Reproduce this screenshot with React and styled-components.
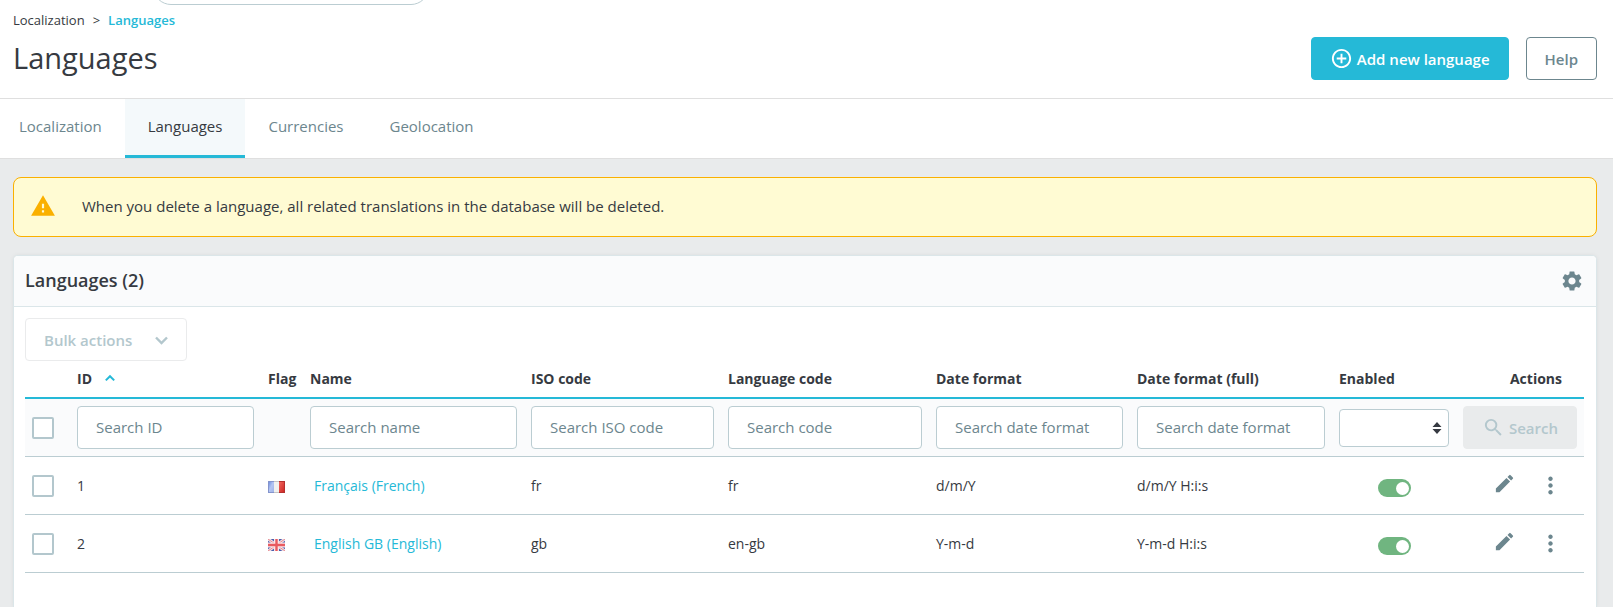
import React from "react";
import styled, { createGlobalStyle, css } from "styled-components";
import {
  MdAddCircleOutline,
  MdEdit,
  MdMoreVert,
  MdSearch,
  MdSettings,
  MdWarning,
} from "react-icons/md";

const color = {
  primary: "#25b9d7",
  text: "#363a41",
  muted: "#6c868e",
  border: "#bbcdd2",
  pale: "#fafbfc",
  page: "#e9ebec",
};

const GlobalStyle = createGlobalStyle`
  *, *::before, *::after { box-sizing: border-box; }
  body {
    margin: 0;
    background: ${color.page};
    color: ${color.text};
    font: 14px/20px "Open Sans", "Noto Sans", sans-serif;
  }
  button, input, select { font: inherit; color: inherit; margin: 0; }
  a { color: ${color.primary}; text-decoration: none; }
  svg { display: block; flex: none; }
`;

const Page = styled.div`
  display: flex;
  flex-direction: column;
  min-height: 100vh;
`;

const TopBar = styled.div`
  display: flex;
  align-items: flex-end;
  height: 5px;
  padding-left: 153px;
  overflow: hidden;
  background: #fff;
`;

const TopSearch = styled.input`
  width: 276px;
  height: 36px;
  flex: none;
  border: 1px solid ${color.border};
  border-radius: 18px;
  background: #fff;
`;

const Header = styled.header`
  padding: 5px 16px 18px 13px;
  background: #fff;
  border-bottom: 1px solid #dfdfdf;
`;

const Breadcrumb = styled.nav`
  display: flex;
  gap: 8px;
  font-size: 13px;
  line-height: 20px;

  a:first-child { color: ${color.text}; }
  a:last-child { font-weight: 600; }
`;

const TitleRow = styled.div`
  display: flex;
  justify-content: space-between;
  align-items: center;
  margin-top: 7px;
`;

const Title = styled.h1`
  margin: 0;
  padding-bottom: 2px;
  font-size: 29px;
  font-weight: 400;
  line-height: 40px;
`;

const ButtonGroup = styled.div`
  display: flex;
  gap: 17px;
`;

const buttonVariants = {
  primary: css`
    background: ${color.primary};
    border-color: ${color.primary};
    color: #fff;
  `,
  outline: css`
    background: #fff;
    border-color: ${color.muted};
    color: ${color.muted};
  `,
  dropdown: css`
    gap: 23px;
    background: #fff;
    border-color: #eaebec;
    color: #b3c7cd;
  `,
  disabled: css`
    width: 100%;
    background: #e9ebec;
    border-color: #e9ebec;
    color: #b3c7cd;
  `,
};

const Button = styled.button`
  display: inline-flex;
  align-items: center;
  justify-content: center;
  height: 43px;
  gap: 4px;
  padding: 0 18px;
  border: 1px solid;
  border-radius: 4px;
  font-size: 15px;
  font-weight: 600;
  white-space: nowrap;
  ${(p) => buttonVariants[p.$variant]}
`;

const Tabs = styled.nav`
  display: flex;
  height: 60px;
  background: #fff;
  border-bottom: 1px solid #dfdfdf;
`;

const Tab = styled.a`
  display: flex;
  align-items: center;
  padding: 0 23px 2px;
  border-bottom: 3px solid ${(p) => (p.$active ? color.primary : "transparent")};
  background: ${(p) => (p.$active ? "#f4f9fb" : "transparent")};
  color: ${(p) => (p.$active ? color.text : color.muted)};
  font-size: 15px;

  &:first-child { padding-left: 19px; }
`;

const Main = styled.main`
  display: flex;
  flex-direction: column;
  flex: 1;
  gap: 18px;
  padding: 18px 16px 0 13px;
`;

const Alert = styled.div`
  display: flex;
  align-items: center;
  gap: 26px;
  height: 60px;
  padding: 0 16px 2px;
  border: 1px solid #fab000;
  border-radius: 8px;
  background: #fffbd3;
  font-size: 15px;

  svg { color: #fab000; }
`;

const Card = styled.section`
  flex: 1;
  padding-bottom: 34px;
  border: 1px solid #dbe6e9;
  border-bottom: 0;
  border-radius: 5px 5px 0 0;
  background: #fff;
  box-shadow: 0 0 4px rgba(0, 0, 0, 0.06);
`;

const CardHeader = styled.div`
  display: flex;
  align-items: center;
  justify-content: space-between;
  height: 51px;
  padding: 0 12px 0 11px;
  border-bottom: 1px solid #dbe6e9;
  border-radius: 4px 4px 0 0;
  background: ${color.pale};
`;

const CardTitle = styled.h2`
  margin: 0;
  padding-bottom: 2px;
  font-size: 18px;
  font-weight: 600;
`;

const CardBody = styled.div`
  padding: 11px 12px 0 11px;
`;

const IconButton = styled.button`
  display: inline-flex;
  padding: 0;
  border: 0;
  background: none;
  color: ${color.muted};
`;

const IconLink = styled.a`
  display: inline-flex;
  color: ${color.muted};
`;

const Table = styled.table`
  width: 100%;
  table-layout: fixed;
  border-collapse: separate;
  border-spacing: 0;
`;

const HeadCell = styled.th`
  height: 38px;
  padding: 0 ${(p) => (p.$align === "right" ? 22 : 0)}px 0 7px;
  border-bottom: 2px solid ${color.primary};
  font-weight: 700;
  text-align: ${(p) => p.$align || "left"};
  white-space: nowrap;
`;

const SortLabel = styled.span`
  display: flex;
  align-items: center;
  gap: 13px;

  svg { color: ${color.primary}; }
`;

const FilterCell = styled.td`
  height: 58px;
  padding: 0 7px;
  border-bottom: 1px solid ${color.border};
  background: ${color.pale};
  vertical-align: middle;
`;

const Cell = styled.td`
  height: 58px;
  padding: 0 7px;
  border-bottom: 1px solid ${color.border};
  vertical-align: middle;
`;

const FilterInput = styled.input`
  display: block;
  width: 100%;
  height: 43px;
  padding: 0 18px 2px;
  border: 1px solid ${color.border};
  border-radius: 4px;
  background: #fff;
  font-size: 15px;

  &::placeholder { color: ${color.muted}; opacity: 1; }
`;

const SelectWrap = styled.div`
  display: grid;
  align-items: center;

  > * { grid-area: 1 / 1; }
  svg { justify-self: end; margin-right: 7px; pointer-events: none; }
`;

const FilterSelect = styled.select`
  width: 100%;
  height: 38px;
  padding: 0 24px 0 12px;
  appearance: none;
  border: 1px solid ${color.border};
  border-radius: 4px;
  background: #fff;
`;

const Checkbox = styled.input.attrs({ type: "checkbox" })`
  display: block;
  width: 22px;
  height: 22px;
  appearance: none;
  border: 2px solid #b3c7cd;
  border-radius: 2px;
  background: #fff;

  &:checked { background: ${color.primary}; }
`;

const Switch = styled.input.attrs({ type: "checkbox", role: "switch" })`
  display: flex;
  align-items: center;
  justify-content: flex-start;
  width: 33px;
  height: 18px;
  margin: 5px auto 0;
  padding: 0 2px;
  appearance: none;
  border-radius: 9px;
  background: ${color.border};

  &::before {
    content: "";
    width: 13px;
    height: 13px;
    border-radius: 50%;
    background: #fff;
  }
  &:checked {
    justify-content: flex-end;
    background: #70b580;
  }
`;

const FlagFrame = styled.span`
  display: block;
  padding-top: 3px;
`;

const NameLink = styled.a`
  padding-left: 4px;
`;

const RowActions = styled.div`
  display: flex;
  justify-content: flex-end;
  align-items: flex-start;
  gap: 21px;
  padding-right: 13px;
`;

const FrenchFlag = () => (
  <svg width="17" height="12" viewBox="0 0 17 12" role="img" aria-label="French flag">
    <defs>
      <linearGradient id="frBlue" x2="1" y2="1">
        <stop offset="0" stopColor="#5b7fd8" />
        <stop offset="0.5" stopColor="#b4c5f3" />
        <stop offset="1" stopColor="#9fb2e4" />
      </linearGradient>
      <linearGradient id="frRed" x2="1" y2="1">
        <stop offset="0" stopColor="#f26a62" />
        <stop offset="1" stopColor="#c91f1c" />
      </linearGradient>
    </defs>
    <rect width="17" height="12" fill="#f1f1ef" />
    <rect width="6" height="12" fill="url(#frBlue)" />
    <rect x="11" width="6" height="12" fill="url(#frRed)" />
    <path d="M0 .5H6M0 11.5H6M.5 0V12" stroke="#8494cc" />
    <path d="M6 .5H11M6 11.5H11" stroke="#c5c5c5" />
    <path d="M11 .5H17M11 11.5H17M16.5 0V12" stroke="#b5302f" />
  </svg>
);

const BritishFlag = () => (
  <svg width="17" height="12" viewBox="0 0 17 12" role="img" aria-label="British flag">
    <rect width="17" height="12" fill="#4a5fae" />
    <path d="M0 0L17 12M17 0L0 12" stroke="#f4dfe4" strokeWidth="3" />
    <path d="M0 0L17 12M17 0L0 12" stroke="#e58a90" strokeWidth="1" />
    <path d="M8.5 0V12M0 6H17" stroke="#fbe6e8" strokeWidth="5" />
    <path d="M8.5 0V12M0 6H17" stroke="#e85a60" strokeWidth="2.4" />
  </svg>
);

const SelectArrows = () => (
  <svg width="10" height="12" viewBox="0 0 10 12" aria-hidden="true">
    <path d="M5 0L9.5 5H.5ZM5 12L.5 7H9.5Z" fill={color.text} />
  </svg>
);

const ChevronDown = () => (
  <svg width="13" height="13" viewBox="0 0 13 13" fill="none" aria-hidden="true">
    <path d="M1 4.5L6.5 10L12 4.5" stroke="currentColor" strokeWidth="2.4" />
  </svg>
);

const SortUp = () => (
  <svg width="10" height="10" viewBox="0 0 10 10" fill="none" aria-hidden="true">
    <path d="M.8 6.4L5 2.2L9.2 6.4" stroke="currentColor" strokeWidth="2" />
  </svg>
);

const columnWidths = [45, 191, 42, 221, 197, 208, 201, 202, 124, 128];

const languages = [
  { id: 1, Flag: FrenchFlag, name: "Français (French)", iso: "fr", code: "fr", date: "d/m/Y", full: "d/m/Y H:i:s" },
  { id: 2, Flag: BritishFlag, name: "English GB (English)", iso: "gb", code: "en-gb", date: "Y-m-d", full: "Y-m-d H:i:s" },
];

const TextFilter = ({ label, placeholder }) => (
  <FilterCell>
    <FilterInput type="text" aria-label={label} placeholder={placeholder} />
  </FilterCell>
);

const LanguageRow = ({ id, Flag, name, iso, code, date, full }) => (
  <tr>
    <Cell><Checkbox aria-label={`Select ${name}`} /></Cell>
    <Cell>{id}</Cell>
    <Cell><FlagFrame><Flag /></FlagFrame></Cell>
    <Cell><NameLink href="#edit">{name}</NameLink></Cell>
    <Cell>{iso}</Cell>
    <Cell>{code}</Cell>
    <Cell>{date}</Cell>
    <Cell>{full}</Cell>
    <Cell><Switch aria-label={`Enable ${name}`} defaultChecked /></Cell>
    <Cell>
      <RowActions>
        <IconLink href="#edit" aria-label={`Edit ${name}`}><MdEdit size={23} /></IconLink>
        <IconButton type="button" aria-label={`More actions for ${name}`}><MdMoreVert size={27} /></IconButton>
      </RowActions>
    </Cell>
  </tr>
);

export default function App() {
  return (
    <Page>
      <GlobalStyle />
      <TopBar><TopSearch type="search" aria-label="Search" /></TopBar>
      <Header>
        <Breadcrumb aria-label="Breadcrumb">
          <a href="#localization">Localization</a>
          <span>&gt;</span>
          <a href="#languages">Languages</a>
        </Breadcrumb>
        <TitleRow>
          <Title>Languages</Title>
          <ButtonGroup>
            <Button type="button" $variant="primary"><MdAddCircleOutline size={23} />Add new language</Button>
            <Button type="button" $variant="outline">Help</Button>
          </ButtonGroup>
        </TitleRow>
      </Header>
      <Tabs aria-label="International">
        <Tab href="#localization">Localization</Tab>
        <Tab href="#languages" $active aria-current="page">Languages</Tab>
        <Tab href="#currencies">Currencies</Tab>
        <Tab href="#geolocation">Geolocation</Tab>
      </Tabs>
      <Main>
        <Alert role="alert">
          <MdWarning size={26} />
          <span>When you delete a language, all related translations in the database will be deleted.</span>
        </Alert>
        <Card>
          <CardHeader>
            <CardTitle>Languages (2)</CardTitle>
            <IconButton type="button" aria-label="Settings"><MdSettings size={24} /></IconButton>
          </CardHeader>
          <CardBody>
            <Button type="button" disabled $variant="dropdown">
              Bulk actions<ChevronDown />
            </Button>
            <Table>
              <colgroup>
                {columnWidths.map((width, i) => <col key={i} width={width} />)}
              </colgroup>
              <thead>
                <tr>
                  <HeadCell aria-label="Selection" />
                  <HeadCell aria-sort="ascending">
                    <SortLabel>ID<SortUp /></SortLabel>
                  </HeadCell>
                  <HeadCell>Flag</HeadCell>
                  <HeadCell>Name</HeadCell>
                  <HeadCell>ISO code</HeadCell>
                  <HeadCell>Language code</HeadCell>
                  <HeadCell>Date format</HeadCell>
                  <HeadCell>Date format (full)</HeadCell>
                  <HeadCell>Enabled</HeadCell>
                  <HeadCell $align="right">Actions</HeadCell>
                </tr>
              </thead>
              <tbody>
                <tr>
                  <FilterCell><Checkbox aria-label="Select all" /></FilterCell>
                  <TextFilter label="ID" placeholder="Search ID" />
                  <FilterCell />
                  <TextFilter label="Name" placeholder="Search name" />
                  <TextFilter label="ISO code" placeholder="Search ISO code" />
                  <TextFilter label="Language code" placeholder="Search code" />
                  <TextFilter label="Date format" placeholder="Search date format" />
                  <TextFilter label="Date format (full)" placeholder="Search date format" />
                  <FilterCell>
                    <SelectWrap>
                      <FilterSelect aria-label="Enabled" defaultValue="">
                        <option value="" />
                        <option value="1">Yes</option>
                        <option value="0">No</option>
                      </FilterSelect>
                      <SelectArrows />
                    </SelectWrap>
                  </FilterCell>
                  <FilterCell>
                    <Button type="button" disabled $variant="disabled"><MdSearch size={23} />Search</Button>
                  </FilterCell>
                </tr>
                {languages.map((language) => <LanguageRow key={language.id} {...language} />)}
              </tbody>
            </Table>
          </CardBody>
        </Card>
      </Main>
    </Page>
  );
}
